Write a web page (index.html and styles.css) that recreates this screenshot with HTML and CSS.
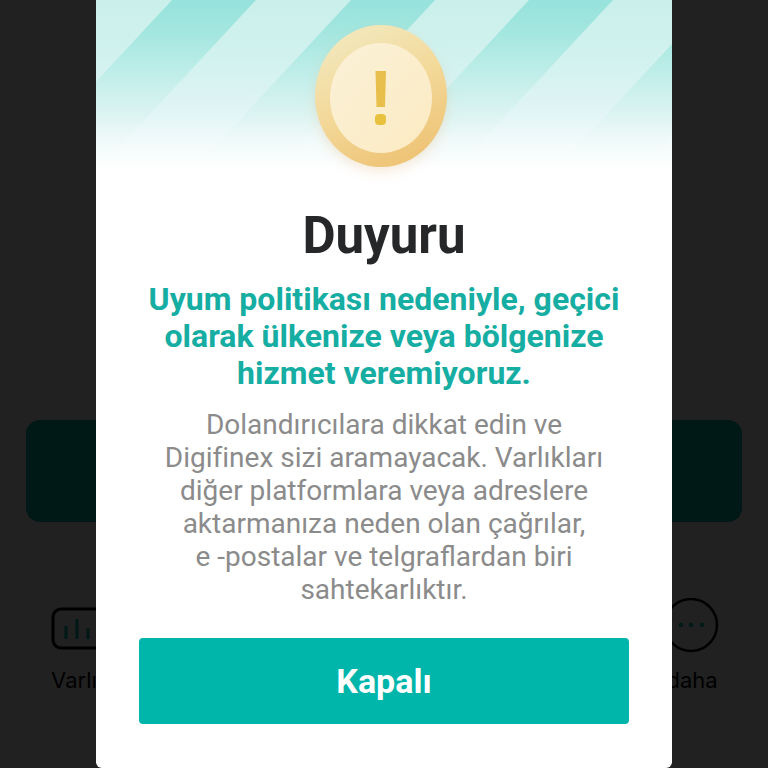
FILE: index.html
```html
<!DOCTYPE html>
<html lang="tr">
<head>
<meta charset="utf-8">
<meta name="viewport" content="width=device-width, initial-scale=1">
<title>Duyuru</title>
<link rel="stylesheet" href="styles.css">
</head>
<body>
<div class="screen">
  <main class="page" aria-hidden="true">
    <div class="banner"></div>
    <div class="shortcuts">
      <div class="shortcut">
        <svg class="shortcut-icon" viewBox="0 0 60 56" fill="none">
          <rect x="3" y="11" width="54" height="39" rx="8" stroke="#000" stroke-width="3"/>
          <path d="M16 28v13M27 21v20M38 30v11" stroke="#00b5aa" stroke-width="3"/>
        </svg>
        <span>Varlık</span>
      </div>
      <div class="shortcut">
        <svg class="shortcut-icon" viewBox="0 0 60 56" fill="none">
          <circle cx="29" cy="27" r="26" stroke="#000" stroke-width="2.500"/>
          <g fill="#00b5aa"><circle cx="19" cy="27" r="2.300"/><circle cx="29" cy="27" r="2.300"/><circle cx="40" cy="27" r="2.300"/></g>
        </svg>
        <span>daha</span>
      </div>
    </div>
  </main>
  <div class="overlay">
    <section class="dialog" role="dialog" aria-modal="true" aria-labelledby="dialog-title">
      <svg class="hero" viewBox="0 0 576 190" aria-hidden="true">
        <defs>
          <linearGradient id="light" gradientUnits="userSpaceOnUse" x1="0" y1="0" x2="0" y2="170">
            <stop offset="0" stop-color="#caf0eb"/>
            <stop offset=".4" stop-color="#d3f2f0"/>
            <stop offset=".63" stop-color="#dff4f5"/>
            <stop offset=".82" stop-color="#f0fafa"/>
            <stop offset="1" stop-color="#fff"/>
          </linearGradient>
          <linearGradient id="dark" gradientUnits="userSpaceOnUse" x1="0" y1="0" x2="0" y2="170">
            <stop offset="0" stop-color="#97e2dc"/>
            <stop offset=".18" stop-color="#a2e6df"/>
            <stop offset=".45" stop-color="#c2eeea"/>
            <stop offset=".65" stop-color="#d9f3f1"/>
            <stop offset=".82" stop-color="#eff9f9"/>
            <stop offset="1" stop-color="#fff"/>
          </linearGradient>
          <linearGradient id="rim" x1=".2" y1="0" x2=".65" y2="1">
            <stop offset="0" stop-color="#f2e9bf"/>
            <stop offset=".5" stop-color="#f3d99a"/>
            <stop offset="1" stop-color="#eec375"/>
          </linearGradient>
          <linearGradient id="face" x1="0" y1="0" x2="1" y2="1">
            <stop offset="0" stop-color="#fbf1d8"/>
            <stop offset="1" stop-color="#fbebc2"/>
          </linearGradient>
          <filter id="shadow" x="-20%" y="-20%" width="140%" height="150%">
            <feDropShadow dx="0" dy="5" stdDeviation="6" flood-color="#dca55f" flood-opacity=".22"/>
          </filter>
        </defs>
        <path fill="url(#light)" d="M0 0h576v170H0z"/>
        <path fill="url(#dark)" d="M76 0h84L2 170h-84zM255 0h84L181 170h-84zM433 0h84L359 170h-84zM617 0h84L543 170h-84z"/>
        <ellipse cx="285" cy="96" rx="66" ry="71" fill="url(#rim)" filter="url(#shadow)"/>
        <ellipse cx="285" cy="98" rx="51" ry="55" fill="url(#face)"/>
        <path fill="#e8bf4c" d="M279.500 71h10.500l-1 36h-8.500z"/>
        <rect x="279" y="114" width="11" height="11" rx="4" fill="#e8c13f"/>
      </svg>
      <div class="content">
        <h1 id="dialog-title" class="title">Duyuru</h1>
        <p class="notice">Uyum politikası nedeniyle, geçici olarak ülkenize veya bölgenize hizmet veremiyoruz.</p>
        <p class="warning">Dolandırıcılara dikkat edin ve Digifinex sizi aramayacak. Varlıkları diğer platformlara veya adreslere aktarmanıza neden olan çağrılar, <br>e -postalar ve telgraflardan biri sahtekarlıktır.</p>
        <button class="close" type="button">Kapalı</button>
      </div>
    </section>
  </div>
</div>
</body>
</html>
```
FILE: styles.css
```css
* {
  box-sizing: border-box;
}

body {
  margin: 0;
  background: #212121;
  font-family: Roboto, "Liberation Sans", sans-serif;
}

.screen {
  display: grid;
  min-height: 100vh;
}

.page,
.overlay {
  grid-area: 1 / 1;
}

.page {
  display: flex;
  flex-direction: column;
  justify-content: flex-end;
  gap: 76px;
  padding: 0 26px 74px;
  background: #fff;
}

.banner {
  height: 102px;
  border-radius: 14px;
  background: #00b5aa;
}

.shortcuts {
  display: flex;
  justify-content: space-between;
  padding: 0 20px 0 24px;
}

.shortcut {
  display: flex;
  flex-direction: column;
  align-items: center;
  gap: 12px;
  color: #000;
  font: 22px/28px Inter, sans-serif;
}

.shortcut-icon {
  width: 60px;
  height: 56px;
}

.overlay {
  display: flex;
  justify-content: center;
  align-items: flex-start;
  z-index: 1;
  background: rgba(0, 0, 0, 0.87);
}

.dialog {
  width: 75%;
  overflow: hidden;
  border-radius: 0 0 6px 6px;
  background: #fff;
  text-align: center;
}

.hero {
  display: block;
  width: 100%;
}

.content {
  display: flex;
  flex-direction: column;
  padding: 16px 43px 44px;
}

.title {
  margin: 0;
  color: #262729;
  font-size: 51px;
  font-weight: 700;
  line-height: 60px;
}

.notice {
  margin: 15px 0 0;
  color: #16ada3;
  font-size: 32px;
  font-weight: 700;
  line-height: 37px;
}

.warning {
  margin: 16px 16px 0;
  color: #8b8b8b;
  font-size: 28px;
  line-height: 33px;
}

.close {
  height: 86px;
  margin-top: 32px;
  border: 0;
  border-radius: 4px;
  background: #00b5aa;
  color: #fff;
  font: 700 34px/40px Roboto, sans-serif;
}
```
